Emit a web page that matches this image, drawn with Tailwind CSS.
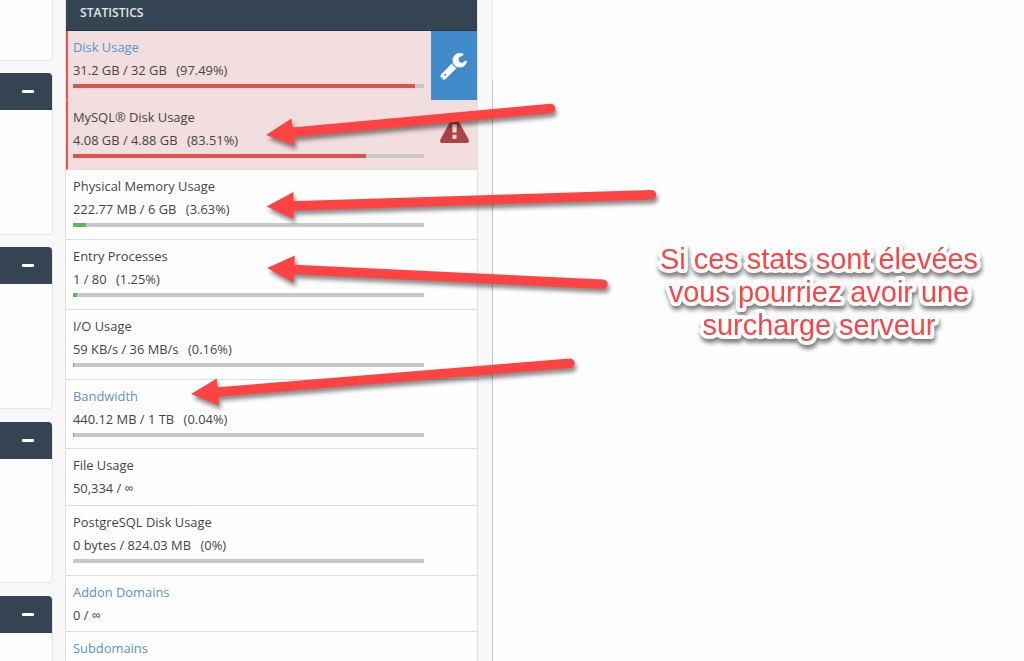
<!DOCTYPE html>
<html lang="en">
  <head>
    <meta charset="UTF-8" />
    <title>Statistics</title>
    <script src="https://cdn.jsdelivr.net/npm/@tailwindcss/browser@4"></script>
  </head>
  <body class="relative h-[661px] w-[1024px] overflow-hidden bg-[#fefefe] font-['Open_Sans',sans-serif] text-[12.9px] text-[#444]">
    <div class="flex h-full">
      <div class="flex h-full w-[492px] bg-[#f8f8f8]">
        <!-- collapsed panels on the left -->
        <div class="flex w-[53px] shrink-0 flex-col gap-[12.5px]">
          <div class="h-[60.5px] shrink-0 rounded-br border-r border-b border-[#e6e6e6] bg-[#fefefe]"></div>
          <div class="h-[161.8px] shrink-0 rounded-r border-r border-b border-[#e6e6e6] bg-[#fefefe]">
            <div class="flex h-[37px] items-center justify-end rounded-tr bg-[#354453] pr-[18px]"><span class="h-[3px] w-3 rounded-[1px] bg-white"></span></div>
          </div>
          <div class="h-[161.8px] shrink-0 rounded-r border-r border-b border-[#e6e6e6] bg-[#fefefe]">
            <div class="flex h-[37px] items-center justify-end rounded-tr bg-[#354453] pr-[18px]"><span class="h-[3px] w-3 rounded-[1px] bg-white"></span></div>
          </div>
          <div class="h-[161.8px] shrink-0 rounded-r border-r border-b border-[#e6e6e6] bg-[#fefefe]">
            <div class="flex h-[37px] items-center justify-end rounded-tr bg-[#354453] pr-[18px]"><span class="h-[3px] w-3 rounded-[1px] bg-white"></span></div>
          </div>
          <div class="flex-1 rounded-tr border-r border-[#e6e6e6] bg-[#fefefe]">
            <div class="flex h-[37px] items-center justify-end rounded-tr bg-[#354453] pr-[18px]"><span class="h-[3px] w-3 rounded-[1px] bg-white"></span></div>
          </div>
        </div>

        <!-- statistics -->
        <div class="ml-[12px] h-full w-[413px] shrink-0 overflow-hidden border-x border-[#e0e0e0] bg-[#fefefe]">
          <div class="h-[31px] border-b border-[#283642] bg-[#354453] pt-[4px] pl-[14px] text-[12.1px] leading-[18px] font-semibold text-[#e6e6e6]">STATISTICS</div>
          <div id="stats"></div>
        </div>
      </div>
      <div class="flex w-px flex-col">
        <div class="h-[80px] bg-[#e8e8e8]"></div>
        <div class="flex-1 bg-[#c4c4c4]"></div>
      </div>
    </div>

    <!-- arrows and caption -->
    <svg class="absolute inset-0" width="1024" height="661">
      <g class="drop-shadow-[2px_4px_2px_rgba(0,0,0,0.45)]" fill="#ff4343" stroke="#ff4343" stroke-width="9.5" stroke-linecap="round">
        <path d="M290 132.6L550.500 108.500" />
        <path d="M266 135L291.500 118.500L294.500 145.500Z" stroke="none" />
        <path d="M290 206L651.500 194.700" />
        <path d="M266.500 206.500L293.500 192L293.500 219Z" stroke="none" />
        <path d="M290 269.200L603 284.300" />
        <path d="M267 268L294.800 255.500L293.500 282.800Z" stroke="none" />
        <path d="M215 392.300L570 363.300" />
        <path d="M191 394L216.800 378.500L219 405.500Z" stroke="none" />
      </g>
      <g class="font-['Liberation_Sans',Arial,sans-serif] text-[28.9px] drop-shadow-[1px_4px_2px_rgba(0,0,0,0.5)] [paint-order:stroke_fill]" fill="#ff4343" stroke="#fff" stroke-width="8" stroke-linejoin="round" text-anchor="middle">
        <text x="819" y="268.500">Si ces stats sont élevées</text>
        <text x="819" y="301.500">vous pourriez avoir une</text>
        <text x="819" y="334.500">surcharge serveur</text>
      </g>
    </svg>

    <script>
      const wrench = `
        <div class="absolute top-0 right-0 flex h-full w-[46px] items-center justify-center bg-[#428bca] pr-px">
          <svg width="29" height="29" viewBox="0 0 1792 1792" fill="#fff"><path d="M448 1472q0-26-19-45t-45-19-45 19-19 45 19 45 45 19 45-19 19-45zm644-420l-682 682q-37 37-90 37-52 0-91-37l-106-108q-38-36-38-90 0-53 38-91l681-681q39 98 114.500 173.500t173.500 114.500zm634-435q0 39-23 106-47 134-164.500 217.500t-258.500 83.500q-185 0-316.500-131.500t-131.500-316.500 131.500-316.500 316.500-131.500q58 0 121.500 16.500t107.500 46.500q16 11 16 28t-16 28l-293 169v224l193 107q5-3 79-48.500t135.500-81 70.500-35.500q15 0 23.500 10t8.500 25z" fill-rule="evenodd"/></svg>
        </div>`;
      const warning = `
        <div class="absolute top-0 right-0 flex h-full w-[46px] justify-center pt-[15.5px]">
          <svg width="29" height="29" viewBox="0 0 1792 1792" fill="#a94442"><path d="M1024 1375v-190q0-14-9.500-23.500t-22.500-9.500h-192q-13 0-22.500 9.500t-9.500 23.500v190q0 14 9.500 23.500t22.500 9.500h192q13 0 22.500-9.500t9.500-23.500zm-2-374l18-459q0-12-10-19-13-11-24-11h-220q-11 0-24 11-10 7-10 21l17 457q0 10 10 16.500t24 6.500h185q14 0 23.500-6.500t10.500-16.500zm-14-934l768 1408q35 63-2 126-17 29-46.500 46t-63.500 17h-1536q-34 0-63.500-17t-46.500-46q-37-63-2-126l768-1408q17-31 47-49t65-18 65 18 47 49z"/></svg>
        </div>`;

      const stats = [
        { name: "Disk Usage", value: "31.2 GB / 32 GB", pct: "97.49%", bar: 97.49, link: true, danger: true, icon: wrench },
        { name: "MySQL® Disk Usage", value: "4.08 GB / 4.88 GB", pct: "83.51%", bar: 83.51, danger: true, icon: warning },
        { name: "Physical Memory Usage", value: "222.77 MB / 6 GB", pct: "3.63%", bar: 3.63 },
        { name: "Entry Processes", value: "1 / 80", pct: "1.25%", bar: 1.25 },
        { name: "I/O Usage", value: "59 KB/s / 36 MB/s", pct: "0.16%", bar: 0.16 },
        { name: "Bandwidth", value: "440.12 MB / 1 TB", pct: "0.04%", bar: 0.04, link: true },
        { name: "File Usage", value: "50,334 / ∞" },
        { name: "PostgreSQL Disk Usage", value: "0 bytes / 824.03 MB", pct: "0%", bar: 0 },
        { name: "Addon Domains", value: "0 / ∞", link: true },
        { name: "Subdomains", value: "", link: true },
      ];

      document.getElementById("stats").innerHTML = stats
        .map((s) => {
          const hasBar = s.bar !== undefined;
          return `
          <div class="relative border-b border-[#ddd] pt-[5px] ${hasBar ? "h-[69.71px]" : "h-[56.7px]"} ${s.danger ? "border-l-2 border-l-[#f0514a] bg-[#f2dede] pl-[5px]" : "pl-[7px]"}">
            <div class="leading-[23px] ${s.link ? "text-[#5b92cb]" : ""}">${s.name}</div>
            <div class="leading-[23px]">${s.value}${s.pct ? `<span class="ml-[9.5px]">(${s.pct})</span>` : ""}</div>
            ${hasBar ? `<div class="mt-[2px] h-[4px] w-[351px] bg-[#c8c8c8]"><div class="h-full ${s.danger ? "bg-[#d9534f]" : "bg-[#5cb85c]"}" style="width: ${s.bar}%"></div></div>` : ""}
            ${s.icon || ""}
          </div>`;
        })
        .join("");
    </script>
  </body>
</html>
